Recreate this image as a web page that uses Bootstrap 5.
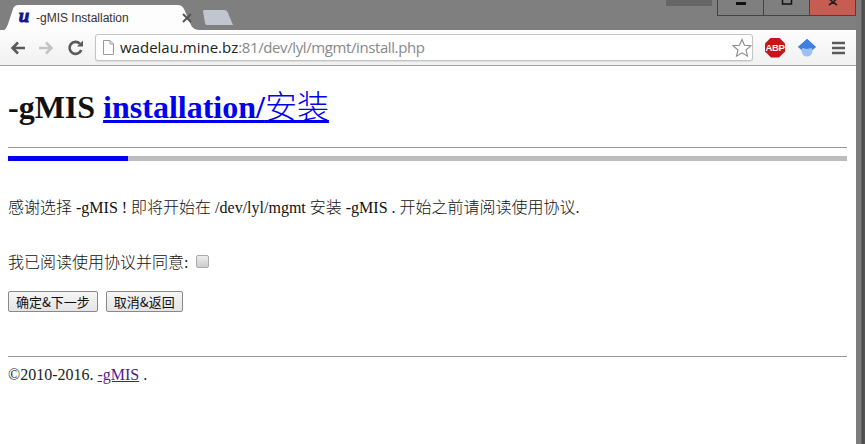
<!DOCTYPE html>
<html lang="zh">
<head>
<meta charset="utf-8">
<title>-gMIS Installation</title>
<link href="https://cdn.jsdelivr.net/npm/bootstrap@5.3.0/dist/css/bootstrap.min.css" rel="stylesheet">
<style>
html,body{height:100%;overflow:hidden}
body{background:#7f7f7f;font-family:"Liberation Serif","Noto Sans CJK SC",serif;color:#111;font-size:16px;line-height:18px}
.win-frame{width:856px;height:444px}
.win-edge{width:9px;height:444px;background:linear-gradient(90deg,#7d7d7d 0,#7d7d7d 5px,#4a4a4a 6px,#555 100%)}
.title-strip{height:30px;position:relative}
.tab-on{width:200px;height:25px;position:relative;margin-top:5px;color:#333}
.tab-shape{position:absolute;left:0;top:0}
.tab-fav{position:relative;width:14px;margin-left:17px;margin-right:5px;padding-top:1px;font:italic 900 19px/20px "Liberation Serif",serif;color:#14148c;text-align:center;-webkit-text-stroke:.9px #14148c}
.tab-name{position:relative;font-family:"Liberation Sans",sans-serif;font-size:12px;line-height:20px;padding-top:3px;color:#333}
.tab-x{position:absolute;left:182px;top:8px}
.tab-off{position:absolute;left:202px;top:10px}
.ghost-box{position:absolute;left:666px;top:0;width:46px;height:6px;background:#666}
.ctrl-group{position:absolute;left:717px;top:0;height:16px;border:1px solid #444;border-top:0}
.ctrl-btn{width:46px;height:15px;position:relative;border-right:1px solid #444}
.ctrl-btn:last-child{border-right:0;background:#c75c50;width:45px}
.tool-row{height:36px;background:linear-gradient(#fdfdfd,#f1f1f1);border-bottom:1px solid #a0a0a0;padding-left:9px}
.nav-ico{width:18px;height:18px;margin-right:10px;flex:none}
.nav-gap{margin-right:12px}
.addr-bar{width:658px;height:27px;background:#fff;border:1px solid #c4c4c4;border-radius:3px;font-family:"Open Sans","Liberation Sans",sans-serif;font-size:15px;color:#888;position:relative;padding-left:7px;box-shadow:0 1px 1px #ddd;margin-top:-1px}
.addr-host{color:#222}
.addr-rest{letter-spacing:-.4px}
.addr-page{margin-right:6px;flex:none}
.addr-star{position:absolute;right:0;top:3px}
.abp-sign{width:20px;height:20px;background:#c8141a;clip-path:polygon(30% 0,70% 0,100% 30%,100% 70%,70% 100%,30% 100%,0 70%,0 30%);color:#fff;font:700 9.5px/20px "Liberation Sans",sans-serif;letter-spacing:-.3px;text-align:center;margin-left:12px;flex:none}
.cap-ico{margin-left:12px;flex:none}
.menu-ico{margin-left:15px;flex:none}
.page-body{background:#fff;height:378px;padding:0 9px 0 8px}
.head-one{font-family:"Liberation Serif","Noto Sans CJK SC",serif;font-size:32px;line-height:37px;font-weight:700;color:#111;margin:0;padding-top:23px}
.head-one a{color:#00e}
.head-cjk{font-weight:300}
.rule-line{height:1px;background:#999;border:0;opacity:1;margin:0}
.rule-top{margin-top:21px}
.step-track{height:5px;background:#bdbdbd;margin-top:8px}
.step-fill{height:5px;background:#00e}
.msg-one{margin:38px 0 0;font-weight:300}
.msg-two{margin:37px 0 0;font-weight:300}
.msg-two .form-check-input{width:13px;height:13px;margin:0 0 0 4px;border:1px solid #aaa;border-radius:2px;background:linear-gradient(#eee,#ccc);vertical-align:0;float:none}
.act-row{margin-top:19px;gap:8px}
.act-btn{font-family:"Noto Sans CJK SC","Liberation Sans",sans-serif;font-size:13px;line-height:15px;height:21px;padding:2px 7px;border:1px solid #888;border-radius:2px;background:linear-gradient(#f6f6f6,#e4e4e4);color:#111;font-weight:400}
.rule-foot{margin-top:44px}
.foot-line{margin:9px 0 0;color:#222}
.foot-line a{color:#551a8b}
</style>
</head>
<body class="d-flex">
<div class="win-frame d-flex flex-column">
  <div class="title-strip d-flex">
    <div class="tab-on d-flex align-items-start">
      <svg class="tab-shape" width="200" height="26" viewBox="0 0 200 26"><path d="M0 26 C6 26 7 22 9 16 L13 4 Q14 0 19 0 L178 0 Q182 0 184 4 L191 20 Q193 25 200 25 L200 26 Z" fill="#fdfdfd"/></svg>
      <span class="tab-fav">u</span>
      <span class="tab-name">-gMIS Installation</span>
      <svg class="tab-x" width="10" height="10" viewBox="0 0 10 10"><path d="M1 1 L9 9 M9 1 L1 9" stroke="#555" stroke-width="2"/></svg>
    </div>
    <svg class="tab-off" width="32" height="16" viewBox="0 0 32 16"><path d="M1 1 Q1 0 3 0 L22 0 Q25 0 26 3 L31 15 L5 15 Q3 15 3 13 Z" fill="#c1c5cf"/></svg>
    <div class="ghost-box"></div>
    <div class="ctrl-group d-flex">
      <div class="ctrl-btn d-flex justify-content-center"><svg width="12" height="6"><rect x="1" y="2" width="10" height="3" fill="#111"/></svg></div>
      <div class="ctrl-btn d-flex justify-content-center"><svg width="12" height="6"><rect x="1.5" y="-2" width="9" height="6" fill="none" stroke="#111" stroke-width="1.5"/></svg></div>
      <div class="ctrl-btn d-flex justify-content-center"><svg width="12" height="6"><path d="M1 -2 L6 2 L11 -2 M6 2 L2 5 M6 2 L10 5" stroke="#222" stroke-width="1.6" fill="none"/></svg></div>
    </div>
  </div>
  <div class="tool-row d-flex align-items-center">
    <svg class="nav-ico" viewBox="0 0 18 18"><path d="M16 9 H4 M9 3.5 L3.5 9 L9 14.5" stroke="#5a5a5a" stroke-width="2.6" fill="none"/></svg>
    <svg class="nav-ico nav-gap" viewBox="0 0 18 18"><path d="M2 9 H14 M9 3.5 L14.500 9 L9 14.500" stroke="#c4c4c4" stroke-width="2.6" fill="none"/></svg>
    <svg class="nav-ico" viewBox="0 0 18 18"><path d="M14.200 11 A6 6 0 1 1 13 4.800" stroke="#5a5a5a" stroke-width="2.600" fill="none"/><path d="M10 7.500 H16 V1.500 Z" fill="#5a5a5a"/></svg>
    <div class="addr-bar d-flex align-items-center">
      <svg class="addr-page" width="11" height="15" viewBox="0 0 11 15"><path d="M.5 .5 H7 L10.500 4 V14.500 H.5 Z M7 .5 V4 H10.500" fill="#fff" stroke="#9a9a9a"/></svg>
      <span><span class="addr-host">wadelau.mine.bz</span><span class="addr-rest">:81/dev/lyl/mgmt/install.php</span></span>
      <svg class="addr-star" width="20" height="20" viewBox="0 0 20 20"><path d="M10 1.500 L12.500 7.300 L18.800 7.800 L14 12 L15.500 18.200 L10 14.900 L4.500 18.200 L6 12 L1.200 7.800 L7.500 7.300 Z" fill="#fff" stroke="#8a8a8a" stroke-width="1.100"/></svg>
    </div>
    <div class="abp-sign">ABP</div>
    <svg class="cap-ico" width="20" height="20" viewBox="0 0 20 20"><path d="M10 1 L19 9 L15 12.500 L5 12.500 L1 9 Z" fill="#3f7fe0"/><circle cx="10" cy="13" r="5.500" fill="#9cc0f0"/><path d="M10 1 L19 9 L10 11 L1 9 Z" fill="#3f7fe0"/></svg>
    <svg class="menu-ico" width="13" height="14" viewBox="0 0 13 14"><path d="M0 2 H13 M0 7 H13 M0 12 H13" stroke="#5a5a5a" stroke-width="2.400"/></svg>
  </div>
  <div class="page-body">
    <h1 class="head-one">-gMIS <a href="#">installation/<span class="head-cjk">安装</span></a></h1>
    <hr class="rule-line rule-top">
    <div class="step-track"><div class="step-fill" style="width:120px"></div></div>
    <p class="msg-one">感谢选择 -gMIS ! 即将开始在 /dev/lyl/mgmt 安装 -gMIS . 开始之前请阅读使用协议.</p>
    <p class="msg-two">我已阅读使用协议并同意: <input class="form-check-input" type="checkbox" aria-label="同意"></p>
    <div class="act-row d-flex">
      <button type="button" class="btn act-btn">确定&amp;下一步</button>
      <button type="button" class="btn act-btn">取消&amp;返回</button>
    </div>
    <hr class="rule-line rule-foot">
    <p class="foot-line">©2010-2016. <a href="#">-gMIS</a> .</p>
  </div>
</div>
<div class="win-edge"></div>
<script src="https://cdn.jsdelivr.net/npm/bootstrap@5.3.0/dist/js/bootstrap.bundle.min.js"></script>
</body>
</html>
